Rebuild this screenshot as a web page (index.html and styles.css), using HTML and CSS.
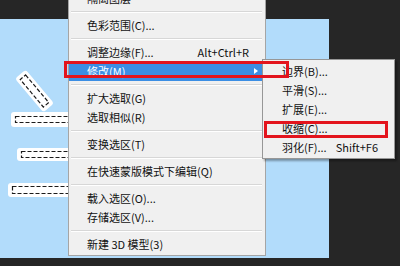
FILE: index.html
```html
<!DOCTYPE html>
<html>
<head>
<meta charset="utf-8">
<link rel="stylesheet" href="styles.css">
</head>
<body>
<div class="stage">
  <div class="canvas">
    <svg class="art" width="329" height="239" viewBox="0 0 329 239">
      <g fill="#fff">
        <rect x="11" y="93" width="110" height="15" rx="3"/>
        <rect x="17" y="129" width="110" height="13" rx="3"/>
        <rect x="8" y="164" width="110" height="14" rx="3"/>
        <rect x="-22" y="-7" width="44" height="14" rx="3" transform="translate(34.5 72) rotate(50)"/>
      </g>
      <g fill="none" stroke="#1a1a1a" stroke-width="1.2" stroke-dasharray="4 2">
        <rect x="15.5" y="97.5" width="100" height="6"/>
        <rect x="21.5" y="132.5" width="100" height="6"/>
        <rect x="12.5" y="167.5" width="100" height="7"/>
        <rect x="-18" y="-3.5" width="36" height="7" transform="translate(34.5 72) rotate(50)"/>
      </g>
    </svg>
  </div>

  <div class="menu main">
    <div class="item">隔离图层</div>
    <div class="sep"></div>
    <div class="item">色彩范围(C)...</div>
    <div class="sep"></div>
    <div class="item"><span>调整边缘(F)...</span><span class="key">Alt+Ctrl+R</span></div>
    <div class="item active"><span>修改(M)</span><i class="arrow"></i></div>
    <div class="sep"></div>
    <div class="item">扩大选取(G)</div>
    <div class="item">选取相似(R)</div>
    <div class="sep"></div>
    <div class="item">变换选区(T)</div>
    <div class="sep"></div>
    <div class="item">在快速蒙版模式下编辑(Q)</div>
    <div class="sep"></div>
    <div class="item">载入选区(O)...</div>
    <div class="item">存储选区(V)...</div>
    <div class="sep"></div>
    <div class="item">新建 3D 模型(3)</div>
  </div>

  <div class="menu sub">
    <div class="item">边界(B)...</div>
    <div class="item">平滑(S)...</div>
    <div class="item">扩展(E)...</div>
    <div class="item">收缩(C)...</div>
    <div class="item"><span>羽化(F)...</span><span class="key">Shift+F6</span></div>
  </div>

  <div class="mark mark-modify"></div>
  <div class="mark mark-shrink"></div>
</div>
</body>
</html>
```

FILE: styles.css
```css
html, body {
  margin: 0;
  padding: 0;
}

body {
  background: #262626;
  font-family: "Noto Sans CJK SC", "Noto Sans", sans-serif;
  font-size: 11px;
  color: #111;
}

.stage {
  position: relative;
  width: 400px;
  height: 266px;
  overflow: hidden;
}

.canvas {
  margin-top: 19px;
  width: 329px;
  height: 239px;
  background: #b2dcfb;
}

.art {
  display: block;
}

.menu {
  position: absolute;
  box-sizing: border-box;
  background: #f0f0f0;
  border: 1px solid #a5a5a5;
}

.main {
  left: 68px;
  top: -13px;
  width: 198px;
  padding: 1px 0;
}

.sub {
  left: 262px;
  top: 59px;
  width: 133px;
  padding: 2px 0 1px;
  border-color: #979797;
  box-shadow: 2px 2px 2px rgba(0, 0, 0, 0.35);
}

.item {
  position: relative;
  display: flex;
  justify-content: space-between;
  height: 19px;
  line-height: 19px;
  padding: 0 16px 0 18px;
  white-space: nowrap;
}

.sub .item {
  padding-left: 19px;
}

.item.active {
  background: #3b8ee4;
  color: #fff;
}

.arrow {
  position: absolute;
  right: 7px;
  top: 6px;
  width: 0;
  height: 0;
  border-left: 4px solid #fff;
  border-top: 3.5px solid transparent;
  border-bottom: 3.5px solid transparent;
}

.sep {
  height: 0;
  margin: 3px 3px 3px 2px;
  border-top: 1px solid #d7d7d7;
  border-bottom: 1px solid #fff;
}

.mark {
  position: absolute;
  box-sizing: border-box;
  border: 3px solid #e3141d;
}

.mark-modify {
  left: 64px;
  top: 61px;
  width: 225px;
  height: 17px;
}

.mark-shrink {
  left: 264px;
  top: 121px;
  width: 124px;
  height: 17px;
}
```
